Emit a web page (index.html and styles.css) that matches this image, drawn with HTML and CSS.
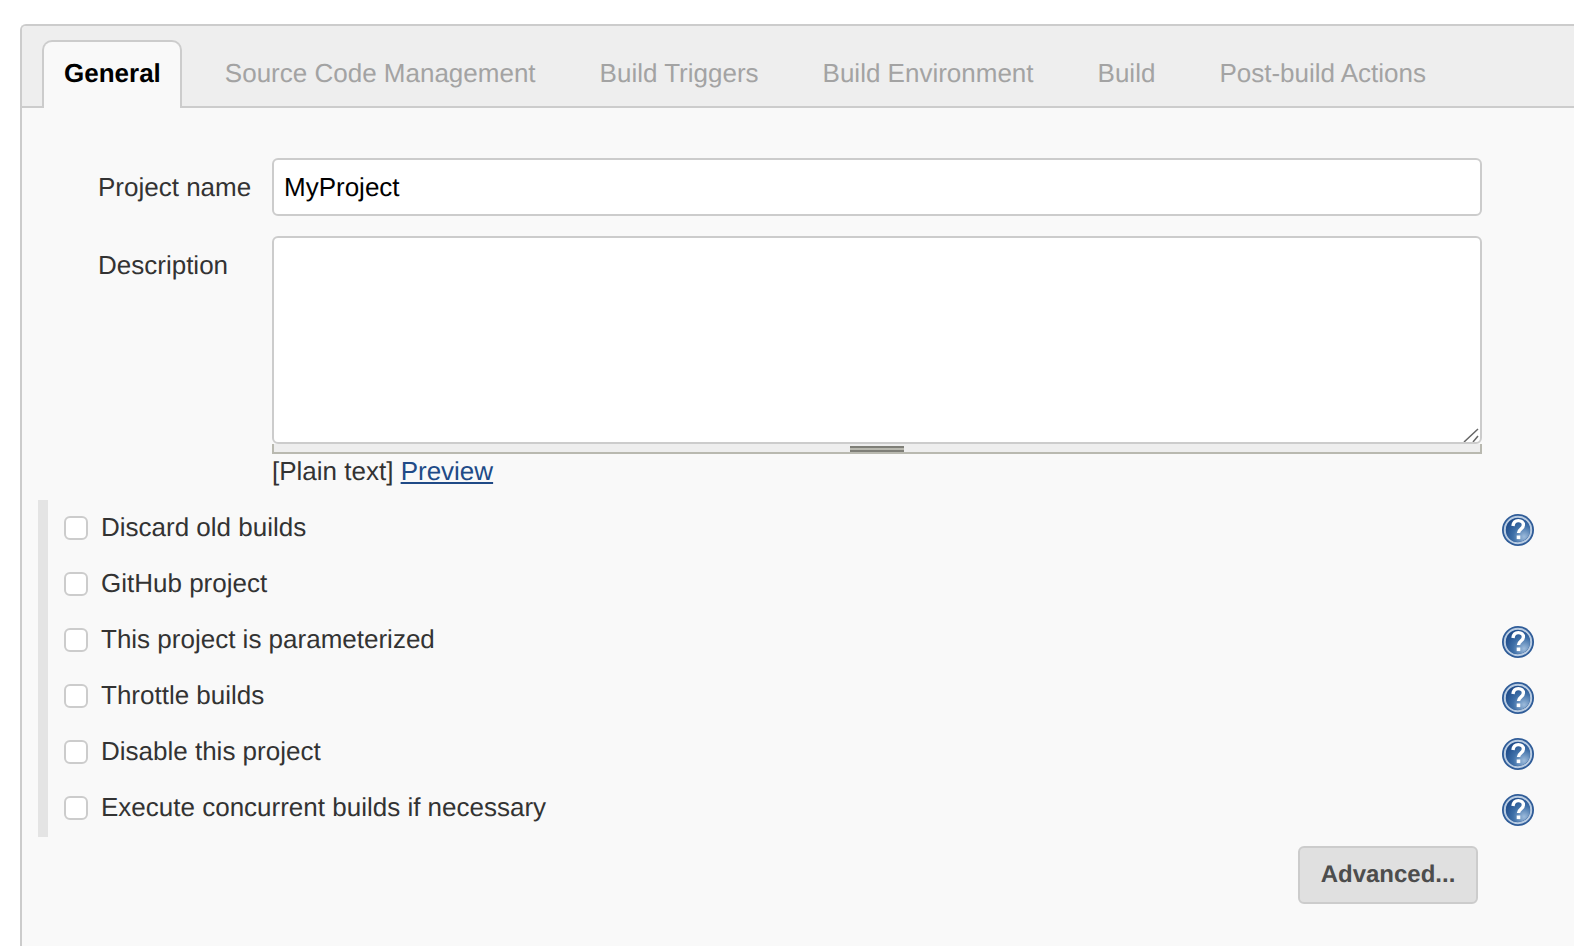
FILE: index.html
```html
<!DOCTYPE html>
<html lang="en">

<head>
  <meta charset="UTF-8">
  <meta name="viewport" content="width=device-width, initial-scale=1.0">
  <title>MyProject Config</title>
  <link rel="stylesheet" href="styles.css">
</head>

<body>
  <svg class="defs" width="0" height="0">
    <defs>
      <radialGradient id="helpFill" cx="0.75" cy="0.78" r="0.9">
        <stop offset="0" stop-color="#9dbbdb" />
        <stop offset="0.5" stop-color="#3f70a8" />
        <stop offset="1" stop-color="#1c4887" />
      </radialGradient>
      <symbol id="help" viewBox="0 0 32 32">
        <circle cx="16" cy="16" r="16" fill="#2f5c98" />
        <circle cx="16" cy="16" r="13.2" fill="none" stroke="#b9cce2" stroke-width="2" />
        <circle cx="16" cy="16" r="12" fill="url(#helpFill)" />
        <path d="M11 12c.3-3.600 2.600-5.400 5.400-5.400 2.900 0 5 1.800 5 4.500 0 3.900-4.900 4-4.900 8" fill="none"
          stroke="#fff" stroke-width="3.400" />
        <rect x="14.700" y="21.500" width="3.600" height="3.600" fill="#fff" />
      </symbol>
    </defs>
  </svg>

  <div class="panel">
    <div class="tabbar">
      <a class="tab active">General</a>
      <a class="tab">Source Code Management</a>
      <a class="tab">Build Triggers</a>
      <a class="tab">Build Environment</a>
      <a class="tab">Build</a>
      <a class="tab">Post-build Actions</a>
    </div>

    <div class="form">
      <div class="field">
        <label class="field-label" for="name">Project name</label>
        <input class="text-input" type="text" id="name" value="MyProject">
      </div>

      <div class="field field-desc">
        <label class="field-label" for="desc">Description</label>
        <div class="desc-box">
          <div class="area-wrap">
            <textarea class="text-area" id="desc"></textarea>
            <svg class="resizer" width="16" height="14" viewBox="0 0 16 14">
              <path d="M1 14 15 1M10 14 15 8" fill="none" stroke="#666" stroke-width="1.500" />
            </svg>
          </div>
          <div class="grip"><span class="grip-handle"></span></div>
          <div class="desc-note">[Plain text] <a href="#">Preview</a></div>
        </div>
      </div>

      <div class="options">
        <div class="option">
          <input class="check" type="checkbox" id="opt1">
          <label for="opt1">Discard old builds</label>
          <svg class="help-icon"><use href="#help" /></svg>
        </div>
        <div class="option">
          <input class="check" type="checkbox" id="opt2">
          <label for="opt2">GitHub project</label>
        </div>
        <div class="option">
          <input class="check" type="checkbox" id="opt3">
          <label for="opt3">This project is parameterized</label>
          <svg class="help-icon"><use href="#help" /></svg>
        </div>
        <div class="option">
          <input class="check" type="checkbox" id="opt4">
          <label for="opt4">Throttle builds</label>
          <svg class="help-icon"><use href="#help" /></svg>
        </div>
        <div class="option">
          <input class="check" type="checkbox" id="opt5">
          <label for="opt5">Disable this project</label>
          <svg class="help-icon"><use href="#help" /></svg>
        </div>
        <div class="option">
          <input class="check" type="checkbox" id="opt6">
          <label for="opt6">Execute concurrent builds if necessary</label>
          <svg class="help-icon"><use href="#help" /></svg>
        </div>
      </div>

      <div class="actions">
        <button class="btn" type="button">Advanced...</button>
      </div>
    </div>
  </div>
</body>

</html>
```

FILE: styles.css
```css
html,
body {
  height: 100%;
}

body {
  font-family: 'Liberation Sans', Arial, sans-serif;
  font-size: 26px;
  color: #333;
  text-rendering: geometricPrecision;
  background-color: #fff;
  margin: 0;
  padding: 24px 0 0 20px;
  box-sizing: border-box;
  overflow: hidden;
}

.defs {
  position: absolute;
}

.panel {
  height: 100%;
  background-color: #f9f9f9;
  border-top: 2px solid #ccc;
  border-left: 2px solid #ccc;
  border-top-left-radius: 6px;
}

.tabbar {
  display: flex;
  height: 82px;
  padding: 14px 0 0 20px;
  box-sizing: border-box;
  background-color: #eee;
  border-bottom: 2px solid #ccc;
  border-top-left-radius: 4px;
}

.tab {
  padding: 18px 21px 0;
  margin-right: 22px;
  color: #a3a3a3;
}

.tab.active {
  height: 68px;
  box-sizing: border-box;
  margin-right: 22px;
  padding: 16px 19px 0 20px;
  font-weight: bold;
  color: #000;
  background-color: #f9f9f9;
  border: 2px solid #ccc;
  border-bottom: none;
  border-radius: 10px 10px 0 0;
}

.form {
  padding: 50px 0 0 16px;
}

.field {
  display: flex;
  align-items: center;
  padding-left: 60px;
}

.field-label {
  width: 174px;
  flex-shrink: 0;
}

.text-input {
  width: 1210px;
  height: 58px;
  box-sizing: border-box;
  padding: 0 10px;
  font-family: inherit;
  font-size: 26px;
  text-rendering: geometricPrecision;
  color: #000;
  background-color: #fff;
  border: 2px solid #ccc;
  border-radius: 6px;
}

.field-desc {
  align-items: flex-start;
  margin-top: 20px;
}

.field-desc .field-label {
  padding-top: 14px;
}

.desc-box {
  width: 1210px;
}

.area-wrap {
  position: relative;
}

.text-area {
  display: block;
  width: 100%;
  height: 208px;
  box-sizing: border-box;
  background-color: #fff;
  border: 2px solid #ccc;
  border-radius: 6px;
  resize: none;
}

.resizer {
  position: absolute;
  right: 3px;
  bottom: 2px;
}

.grip {
  display: flex;
  justify-content: center;
  height: 10px;
  box-sizing: border-box;
  background-color: #eee;
  border: 2px solid #b9b9b0;
  border-top: none;
}

.grip-handle {
  width: 54px;
  height: 6px;
  margin-top: 2px;
  background-color: #b9b9b0;
  border-top: 2px solid #7f7f78;
  border-bottom: 2px solid #7f7f78;
  box-sizing: border-box;
}

.desc-note {
  margin-top: 1px;
  line-height: 32px;
}

.desc-note a {
  color: #204a87;
}

.options {
  margin-top: 13px;
  border-left: 10px solid #e4e4e4;
  padding: 0 0 1px 16px;
  width: 1496px;
  box-sizing: border-box;
}

.option {
  display: flex;
  align-items: center;
  height: 56px;
}

.option label {
  margin-top: -2px;
}

.check {
  appearance: none;
  width: 24px;
  height: 24px;
  margin: 0 13px 0 0;
  background-color: #fff;
  border: 2px solid #ccc;
  border-radius: 6px;
  flex-shrink: 0;
}

.help-icon {
  width: 32px;
  height: 32px;
  margin-left: auto;
  margin-top: 3px;
}

.actions {
  display: flex;
  justify-content: flex-end;
  width: 1440px;
  box-sizing: border-box;
  margin-top: 9px;
}

.btn {
  width: 180px;
  height: 58px;
  font-family: inherit;
  font-size: 24px;
  font-weight: bold;
  text-rendering: geometricPrecision;
  color: #4d4d4d;
  background-color: #e0e0e0;
  border: 2px solid #ccc;
  border-radius: 6px;
}
```
